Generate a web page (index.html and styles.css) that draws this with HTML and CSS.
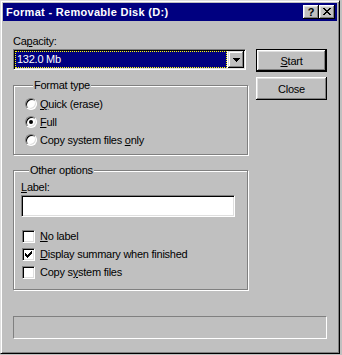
FILE: index.html
```html
<!DOCTYPE html>
<html lang="en">
<head>
  <meta charset="UTF-8" />
  <title>Format - Removable Disk (D:)</title>
  <link rel="stylesheet" href="styles.css">
</head>
<body>
  <div class="window">
    <div class="titlebar">
      <span class="title">Format - Removable Disk (D:)</span>
      <div class="caption-buttons">
        <button class="cap-btn help">?</button>
        <button class="cap-btn close">
          <svg width="8" height="7" viewBox="0 0 8 7">
            <path d="M0 0h2v1h1v1h2v-1h1v-1h2v1h-1v1h-1v1h-1v1h1v1h1v1h1v1h-2v-1h-1v-1h-2v1h-1v1h-2v-1h1v-1h1v-1h1v-1h-1v-1h-1v-1h-1z" fill="#000"/>
          </svg>
        </button>
      </div>
    </div>

    <div class="content">
      <div class="main">
        <div class="left">
          <div class="field-label">Ca<u>p</u>acity:</div>
          <div class="combo">
            <div class="combo-value"><span class="focus">132.0 Mb</span></div>
            <div class="combo-arrow">
              <svg width="7" height="4" viewBox="0 0 7 4"><path d="M0 0h7v1h-1v1h-1v1h-1v1h-1v-1h-1v-1h-1v-1h-1z" fill="#000"/></svg>
            </div>
          </div>

          <fieldset class="group format-type">
            <legend>Format type</legend>
            <div class="option"><span class="radio"></span><span><u>Q</u>uick (erase)</span></div>
            <div class="option"><span class="radio checked"></span><span><u>F</u>ull</span></div>
            <div class="option"><span class="radio"></span><span>Copy system files <u>o</u>nly</span></div>
          </fieldset>

          <fieldset class="group other-options">
            <legend>Other options</legend>
            <div class="field-label"><u>L</u>abel:</div>
            <div class="textbox"></div>
            <div class="checks">
              <div class="option"><span class="checkbox"></span><span><u>N</u>o label</span></div>
              <div class="option">
                <span class="checkbox">
                  <svg width="7" height="7" viewBox="0 0 7 7"><path d="M6 0h1v3h-1v1h-1v1h-1v1h-1v1h-1v-1h-1v-1h-1v-3h1v1h1v1h1v-1h1v-1h1v-1h1z" fill="#000"/></svg>
                </span>
                <span><u>D</u>isplay summary when finished</span>
              </div>
              <div class="option"><span class="checkbox"></span><span>Copy s<u>y</u>stem files</span></div>
            </div>
          </fieldset>
        </div>

        <div class="actions">
          <button class="btn default"><u>S</u>tart</button>
          <button class="btn">Close</button>
        </div>
      </div>

      <div class="status"></div>
    </div>
  </div>
</body>
</html>
```

FILE: styles.css
```css
body {
  margin: 0;
  background-color: #C0C0C0;
  font-family: 'Liberation Sans', Arial, sans-serif;
  font-size: 11px;
  letter-spacing: -0.25px;
  color: #000000;
}
u {
  text-decoration-thickness: 1px;
  text-underline-offset: 1px;
}
.window {
  width: 334px;
  height: 348px;
  background-color: #C0C0C0;
  border: 1px solid;
  border-color: #DFDFDF #000000 #000000 #DFDFDF;
  box-shadow: inset 1px 1px #FFFFFF, inset -1px -1px #808080;
  padding: 2px;
  display: flex;
  flex-direction: column;
}
.titlebar {
  height: 18px;
  background-color: #000080;
  color: #FFFFFF;
  display: flex;
  align-items: center;
  justify-content: space-between;
  padding: 0 2px 0 3px;
}
.title {
  font-weight: 700;
  font-size: 11px;
  letter-spacing: 0.3px;
}
.caption-buttons {
  display: flex;
}
.cap-btn {
  width: 16px;
  height: 14px;
  padding: 0;
  border: none;
  background-color: #C0C0C0;
  box-shadow: inset -1px -1px #000000, inset 1px 1px #FFFFFF, inset -2px -2px #808080, inset 2px 2px #DFDFDF;
  display: flex;
  align-items: center;
  justify-content: center;
  font-family: 'Liberation Sans', Arial, sans-serif;
  font-weight: 700;
  font-size: 11px;
  line-height: 14px;
  color: #000000;
}
.cap-btn svg {
  display: block;
  margin-top: -1px;
}
.content {
  padding: 14px 10px 0 10px;
  display: flex;
  flex-direction: column;
}
.main {
  display: flex;
  align-items: flex-start;
}
.left {
  width: 234px;
}
.field-label {
  line-height: 13px;
  height: 13px;
}
.combo {
  margin-top: 1px;
  width: 229px;
  height: 17px;
  border: 1px solid;
  border-color: #808080 #FFFFFF #FFFFFF #808080;
  box-shadow: inset 1px 1px #000000, inset -1px -1px #DFDFDF;
  background-color: #FFFFFF;
  padding: 1px;
  display: flex;
}
.combo-value {
  flex: 1;
  margin-right: 1px;
  background-color: #000080;
  display: flex;
}
.focus {
  flex: 1;
  border: 1px dotted #FFFF00;
  color: #FFFFFF;
  line-height: 15px;
  padding-left: 1px;
}
.combo-arrow {
  width: 16px;
  height: 17px;
  background-color: #C0C0C0;
  box-shadow: inset -1px -1px #000000, inset 1px 1px #DFDFDF, inset -2px -2px #808080, inset 2px 2px #FFFFFF;
  display: flex;
  align-items: center;
  justify-content: center;
}
.combo-arrow svg {
  display: block;
}
.group {
  margin: 0;
  padding: 3px 0 3px 11px;
  min-inline-size: 0;
  width: 222px;
  border: 1px solid #808080;
  box-shadow: inset 1px 1px #FFFFFF, 1px 1px #FFFFFF;
}
.group legend {
  padding: 0 1px;
  margin-left: 8px;
  line-height: 13px;
  background-color: #C0C0C0;
}
.format-type {
  margin-top: 9px;
  padding-bottom: 5px;
}
.other-options {
  margin-top: 9px;
  padding: 4px 0 8px 7px;
  width: 226px;
}
.option {
  height: 18px;
  display: flex;
  align-items: center;
  gap: 3px;
}
.radio {
  box-sizing: border-box;
  width: 12px;
  height: 12px;
  border-radius: 50%;
  background-color: #FFFFFF;
  border: 1px solid;
  border-color: #808080 #FFFFFF #FFFFFF #808080;
  box-shadow: inset 1px 1px #000000, inset -1px -1px #DFDFDF;
  display: flex;
  align-items: center;
  justify-content: center;
}
.radio.checked::after {
  content: "";
  width: 4px;
  height: 4px;
  border-radius: 50%;
  background-color: #000000;
}
.textbox {
  margin-top: 1px;
  width: 210px;
  height: 18px;
  background-color: #FFFFFF;
  border: 1px solid;
  border-color: #808080 #FFFFFF #FFFFFF #808080;
  box-shadow: inset 1px 1px #000000, inset -1px -1px #DFDFDF;
  padding: 1px;
}
.checks {
  margin-top: 10px;
  margin-left: 1px;
}
.checks .option {
  gap: 5px;
}
.checkbox {
  box-sizing: border-box;
  width: 13px;
  height: 13px;
  background-color: #FFFFFF;
  border: 1px solid;
  border-color: #808080 #FFFFFF #FFFFFF #808080;
  box-shadow: inset 1px 1px #000000, inset -1px -1px #DFDFDF;
  display: flex;
  align-items: center;
  justify-content: center;
}
.checkbox svg {
  display: block;
}
.actions {
  margin-left: 9px;
  display: flex;
  flex-direction: column;
  gap: 5px;
  padding-top: 14px;
}
.btn {
  width: 71px;
  height: 23px;
  padding: 0;
  border: none;
  background-color: #C0C0C0;
  box-shadow: inset -1px -1px #000000, inset 1px 1px #FFFFFF, inset -2px -2px #808080, inset 2px 2px #DFDFDF;
  font-family: 'Liberation Sans', Arial, sans-serif;
  font-size: 11px;
  letter-spacing: -0.25px;
  color: #000000;
}
.btn.default {
  border: 1px solid #000000;
}
.status {
  margin-top: 26px;
  width: 312px;
  height: 21px;
  border: 1px solid;
  border-color: #808080 #FFFFFF #FFFFFF #808080;
}
```
